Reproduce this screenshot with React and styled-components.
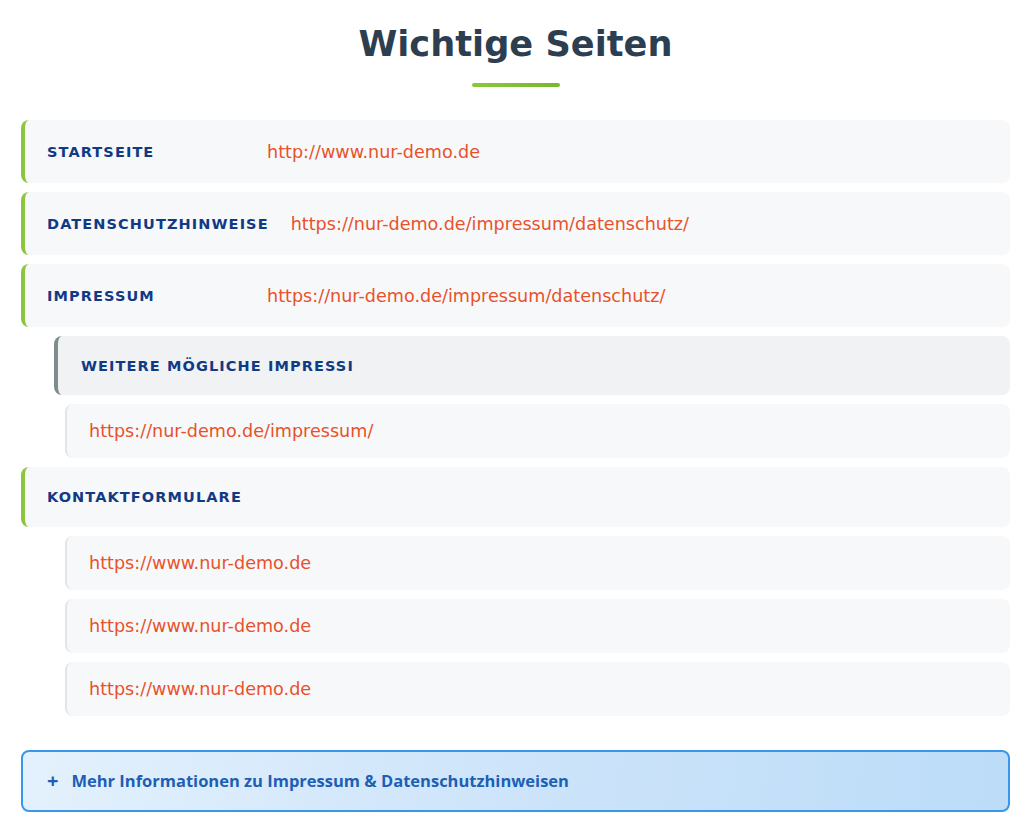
import React from 'react'
import styled, { createGlobalStyle } from 'styled-components'

const GlobalStyle = createGlobalStyle`
  html, body {
    margin: 0;
    padding: 0;
    background: #ffffff;
  }
  body {
    font-family: "DejaVu Sans", "Liberation Sans", sans-serif;
  }
`

const Page = styled.div`
  width: 989px;
  margin-left: 21px;
  padding-top: 23px;
  padding-bottom: 16px;
`

const Header = styled.div`
  display: flex;
  flex-direction: column;
  align-items: center;
  margin-bottom: 33px;
`

const Title = styled.h1`
  margin: 0;
  font-size: 35.2px;
  line-height: 42px;
  font-weight: bold;
  color: #2c3e50;
`

const TitleBar = styled.div`
  width: 88px;
  height: 4px;
  margin-top: 18px;
  border-radius: 2px;
  background: linear-gradient(90deg, #8cc63f, #78b72e);
`

const List = styled.div`
  display: flex;
  flex-direction: column;
  gap: 9px;
`

const Row = styled.div`
  display: flex;
  align-items: center;
  gap: 22px;
  height: ${props => (props.compact ? '59.5px' : '63px')};
  box-sizing: border-box;
  padding: 0 20px 0 22px;
  background: #f7f8fa;
  border-left: 4px solid #8cc63f;
  border-radius: 8px;
`

const SubHeader = styled.div`
  display: flex;
  align-items: center;
  height: 59px;
  box-sizing: border-box;
  margin-left: 33px;
  padding: 0 20px 0 23px;
  background: #f0f2f4;
  border-left: 4px solid #7f8c8d;
  border-radius: 8px;
`

const SubRow = styled.div`
  display: flex;
  align-items: center;
  height: 54px;
  box-sizing: border-box;
  margin-left: 44px;
  padding: 0 20px 0 22px;
  background: #f7f8fa;
  border-left: 2px solid #e1e4e8;
  border-radius: 8px;
`

const Label = styled.span`
  min-width: 198px;
  font-size: 14.5px;
  font-weight: bold;
  letter-spacing: 1.1px;
  text-transform: uppercase;
  color: #113a85;
  white-space: nowrap;
`

const Url = styled.a`
  font-size: 17.6px;
  line-height: 24px;
  color: #e8522a;
  text-decoration: none;
`

const MoreButton = styled.button`
  display: flex;
  align-items: center;
  gap: 13px;
  width: 100%;
  height: 62px;
  margin-top: 34px;
  padding: 0 24px;
  box-sizing: border-box;
  border: 2px solid #3797ec;
  border-radius: 8px;
  background: linear-gradient(100deg, #e4f1fd 0%, #cde4fa 50%, #bcdcf8 100%);
  color: #1c5fb5;
  font-family: "Open Sans", "Noto Sans", sans-serif;
  font-size: 16.5px;
  font-weight: 700;
  text-align: left;
  cursor: pointer;
`

const Plus = styled.span`
  font-size: 20px;
  font-weight: 700;
  line-height: 1;
`

const pages = [
  { label: 'Startseite', url: 'http://www.nur-demo.de' },
  { label: 'Datenschutzhinweise', url: 'https://nur-demo.de/impressum/datenschutz/' },
  { label: 'Impressum', url: 'https://nur-demo.de/impressum/datenschutz/' },
]

const contactForms = [
  'https://www.nur-demo.de',
  'https://www.nur-demo.de',
  'https://www.nur-demo.de',
]

export default function App() {
  return (
    <>
      <GlobalStyle />
      <Page>
        <Header>
          <Title>Wichtige Seiten</Title>
          <TitleBar />
        </Header>
        <List>
          {pages.map(page => (
            <Row key={page.label}>
              <Label>{page.label}</Label>
              <Url href={page.url}>{page.url}</Url>
            </Row>
          ))}
          <SubHeader>
            <Label>Weitere mögliche Impressi</Label>
          </SubHeader>
          <SubRow>
            <Url href="https://nur-demo.de/impressum/">https://nur-demo.de/impressum/</Url>
          </SubRow>
          <Row compact>
            <Label>Kontaktformulare</Label>
          </Row>
          {contactForms.map((url, i) => (
            <SubRow key={i}>
              <Url href={url}>{url}</Url>
            </SubRow>
          ))}
        </List>
        <MoreButton>
          <Plus>+</Plus>
          Mehr Informationen zu Impressum &amp; Datenschutzhinweisen
        </MoreButton>
      </Page>
    </>
  )
}
